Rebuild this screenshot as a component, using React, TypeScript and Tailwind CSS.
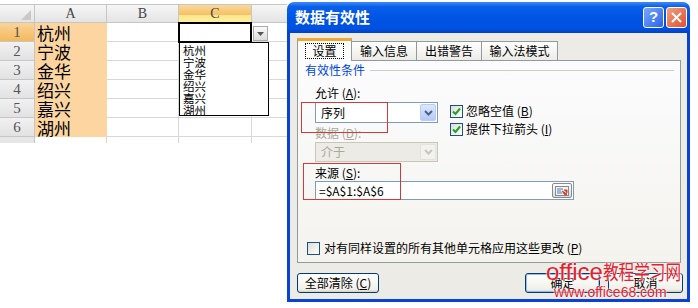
import React from "react";

const cjk = "font-['Noto_Sans_CJK_SC',sans-serif]";
const cities = ["杭州", "宁波", "金华", "绍兴", "嘉兴", "湖州"];

function HeaderCell({ w, label, active }: { w: string; label: string; active?: boolean }) {
  return (
    <div
      className={`${w} flex h-full items-center justify-center border-r border-b border-[#c6c6c6] font-['Liberation_Serif',serif] text-[14px] text-[#444] ${
        active ? "bg-[linear-gradient(#f9d89c,#f6bf62_60%,#fde68a_61%,#fff0a0)]" : "bg-[linear-gradient(#f6f6f6,#e4e4e4)]"
      }`}
    >
      {label}
    </div>
  );
}

function Sheet() {
  return (
    <div className="relative w-[287px] shrink-0 pt-[4px]">
      <div className="flex h-[19px] border-t border-[#c6c6c6]">
        <div className="relative h-full w-[35px] border-r border-b border-[#c6c6c6] bg-[linear-gradient(#f6f6f6,#e4e4e4)]">
          <svg className="absolute right-[3px] bottom-[2px]" width="10" height="10" viewBox="0 0 10 10">
            <polygon points="10,0 10,10 0,10" fill="#c9c9c9" />
          </svg>
        </div>
        <HeaderCell w="w-[72px]" label="A" />
        <HeaderCell w="w-[72px]" label="B" />
        <HeaderCell w="w-[73px]" label="C" active />
        <div className="h-full w-[35px] border-b border-[#c6c6c6] bg-[linear-gradient(#f6f6f6,#e4e4e4)]" />
      </div>
      {cities.map((c, i) => (
        <div key={c} className="flex h-[19px]">
          <div
            className={`flex h-full w-[35px] items-center justify-center border-r border-b border-[#c6c6c6] font-['Liberation_Serif',serif] text-[15px] text-[#555] ${
              i === 0 ? "bg-[linear-gradient(#f9d49a,#f4b95c)]" : "bg-[linear-gradient(#f1f1f1,#e2e2e2)]"
            }`}
          >
            {i + 1}
          </div>
          <div className={`flex h-full w-[72px] items-center border-r border-b border-[#fdd5a0] bg-[#fdd5a0] pl-[2px] ${cjk} text-[17px] leading-none text-black`}>
            {c}
          </div>
          <div className="h-full w-[72px] border-r border-b border-[#d8d8d8]" />
          <div className="h-full w-[73px] border-r border-b border-[#d8d8d8]" />
          <div className="h-full w-[35px] border-b border-[#d8d8d8]" />
        </div>
      ))}
      <div className="flex h-[6px]">
        <div className="h-full w-[35px] border-r border-[#c6c6c6] bg-[#e6e6e6]" />
        <div className="h-full w-[72px] border-r border-[#d8d8d8]" />
        <div className="h-full w-[72px] border-r border-[#d8d8d8]" />
        <div className="h-full w-[73px] border-r border-[#d8d8d8]" />
      </div>

      {/* selected cell C1 */}
      <div className="absolute top-[22px] left-[178px] h-[21px] w-[74px] border-2 border-black bg-white" />
      <div className="absolute top-[26px] left-[253px] flex h-[15px] w-[15px] items-center justify-center border border-[#a9a9a9] bg-[linear-gradient(#fafafa,#dcdcdc)]">
        <svg width="7" height="4" viewBox="0 0 7 4">
          <polygon points="0,0 7,0 3.5,4" fill="#555" />
        </svg>
      </div>
      {/* dropdown list */}
      <div className={`absolute top-[42px] left-[179px] flex h-[74px] w-[90px] flex-col border border-black bg-white pt-[1px] pl-[3px] ${cjk} text-[11.5px] text-black`}>
        {cities.map((c) => (
          <div key={c} className="flex h-[12px] items-center overflow-visible leading-[12px]">
            {c}
          </div>
        ))}
      </div>
    </div>
  );
}

function Check({ on }: { on?: boolean }) {
  return (
    <div className="flex h-[13px] w-[13px] shrink-0 items-center justify-center border border-[#1c5180] bg-[linear-gradient(135deg,#dcdcd7,#ffffff)]">
      {on && (
        <svg width="9" height="9" viewBox="0 0 9 9">
          <path d="M1 4.5 L3.5 7 L8 1.5" stroke="#21a121" strokeWidth="2" fill="none" />
        </svg>
      )}
    </div>
  );
}

function Arrow({ disabled }: { disabled?: boolean }) {
  return (
    <div
      className={`flex h-full w-[16px] items-center justify-center rounded-[2px] border ${
        disabled ? "border-[#e2e2e0] bg-[#f2f2ee]" : "border-[#b8ccf5] bg-[linear-gradient(#dde8ff,#b5c9f7)]"
      }`}
    >
      <svg width="9" height="6" viewBox="0 0 9 6">
        <path d="M1 1 L4.5 4.5 L8 1" stroke={disabled ? "#c9c7ba" : "#4d6185"} strokeWidth="2" fill="none" />
      </svg>
    </div>
  );
}

function Btn({ children, w, def }: { children: React.ReactNode; w: string; def?: boolean }) {
  return (
    <div
      className={`${w} flex h-[20px] items-center justify-center rounded-[3px] border ${
        def ? "border-[#003c74] shadow-[inset_0_0_0_1px_#9bb9f3]" : "border-[#003c74]"
      } bg-[linear-gradient(#ffffff,#f0f0ea_85%,#d6d0c5)] text-[12px] text-black`}
    >
      {children}
    </div>
  );
}

function Dialog() {
  return (
    <div className={`mt-[2px] flex h-[300px] w-[403px] shrink-0 flex-col ${cjk}`}>
      <div className="flex h-[31px] shrink-0 items-center rounded-t-[7px] bg-[linear-gradient(#3d8bf7,#0a5fea_15%,#0054e3_50%,#0052e0_85%,#0042c4)] pr-[3px] pl-[8px]">
        <span className="text-[15px] font-bold text-white">数据有效性</span>
        <div className="ml-auto flex gap-[2px]">
          <div className="flex h-[21px] w-[21px] items-center justify-center rounded-[3px] border border-white bg-[linear-gradient(135deg,#7aa8ff,#2b63e8)] font-['Liberation_Sans',sans-serif] text-[15px] font-bold text-white">
            ?
          </div>
          <div className="flex h-[21px] w-[21px] items-center justify-center rounded-[3px] border border-white bg-[linear-gradient(135deg,#f0a080,#e0502e)]">
            <svg width="11" height="11" viewBox="0 0 11 11">
              <path d="M1 1 L10 10 M10 1 L1 10" stroke="white" strokeWidth="2" />
            </svg>
          </div>
        </div>
      </div>
      <div className="flex flex-1 flex-col border-x-[3px] border-b-[3px] border-[#0842d6] bg-[#ecebe6] pt-[5px] pl-[7px]">
        {/* tabs */}
        <div className="flex h-[22px] items-end text-[12px] text-black">
          <div className="relative z-10 -mb-px flex h-[23px] w-[55px] items-center justify-center border-x border-t-[3px] border-x-[#919b9c] border-t-[#f1a832] bg-[#fbfbf9]">
            <span className="border border-dotted border-black px-[6px] leading-[14px]">设置</span>
          </div>
          <div className="flex h-[19px] w-[65px] items-center justify-center border-t border-r border-[#919b9c] bg-[linear-gradient(#ffffff,#ecebe6)]">输入信息</div>
          <div className="flex h-[19px] w-[65px] items-center justify-center border-t border-r border-[#919b9c] bg-[linear-gradient(#ffffff,#ecebe6)]">出错警告</div>
          <div className="flex h-[19px] w-[76px] items-center justify-center border-t border-r border-[#919b9c] bg-[linear-gradient(#ffffff,#ecebe6)]">输入法模式</div>
        </div>
        {/* panel */}
        <div className="relative flex h-[203px] w-[384px] flex-col border border-[#919b9c] bg-[linear-gradient(#fcfcfe,#f4f3ee)] text-[12px] text-black">
          <div className="mt-[2px] flex items-center pl-[7px]">
            <span className="leading-[14px] text-[#0046d5]">有效性条件</span>
            <div className="mr-[6px] ml-[5px] h-px flex-1 bg-[#d0d0bf]" />
          </div>
          <div className="flex">
            <div className="flex w-[135px] flex-col pl-[17px]">
              <div className="mt-[9px] leading-[14px]">
                允许 (<u>A</u>):
              </div>
              <div className="mt-[2px] flex h-[21px] w-[123px] items-center border border-[#7f9db9] bg-white p-[1px]">
                <span className="flex-1 pl-[4px]">序列</span>
                <Arrow />
              </div>
              <div className="mt-[3px] leading-[14px] text-[#aca899]">
                数据 (<u>D</u>):
              </div>
              <div className="mt-[2px] flex h-[20px] w-[123px] items-center border border-[#c9c7ba] bg-[#ecebe6] p-[1px] text-[#aca899]">
                <span className="flex-1 pl-[4px]">介于</span>
                <Arrow disabled />
              </div>
            </div>
            <div className="mt-[27px] flex flex-col gap-[4px] pl-[17px]">
              <div className="flex items-center gap-[3px] leading-[14px]">
                <Check on />
                <span>
                  忽略空值 (<u>B</u>)
                </span>
              </div>
              <div className="flex items-center gap-[3px] leading-[14px]">
                <Check on />
                <span>
                  提供下拉箭头 (<u>I</u>)
                </span>
              </div>
            </div>
          </div>
          <div className="mt-[4px] pl-[17px] leading-[14px]">
            来源 (<u>S</u>):
          </div>
          <div className="mt-[1px] ml-[17px] flex h-[19px] w-[259px] items-center border border-[#7f9db9] bg-white pr-[1px]">
            <span className="flex-1 pl-[3px] font-['SimSun','Noto_Sans_CJK_SC',monospace] text-[12px]">=$A$1:$A$6</span>
            <div className="flex h-[15px] w-[20px] items-center justify-center rounded-[2px] border border-[#8a8a8a] bg-[linear-gradient(#ffffff,#dcdcd4)]">
              <svg width="14" height="10" viewBox="0 0 14 10">
                <rect x="0.5" y="0.5" width="13" height="9" fill="#f4f4f4" stroke="#7a8aa8" />
                <path d="M2 3 H8 M2 5 H6 M2 7 H7" stroke="#5078b8" />
                <path d="M7 5 L12 8 L10 9 Z M9 4 L12 4 L12 7" fill="#d83a1a" stroke="#d83a1a" />
              </svg>
            </div>
          </div>
          <div className="mt-auto mb-[7px] flex items-center gap-[4px] pl-[9px] leading-[14px]">
            <Check />
            <span>
              对有同样设置的所有其他单元格应用这些更改 (<u>P</u>)
            </span>
          </div>

          {/* red highlight boxes */}
          <div className="absolute top-[41px] left-[3px] h-[31px] w-[87px] border-[1.5px] border-[#d03a3a]" />
          <div className="absolute top-[102px] left-[5px] h-[37px] w-[98px] border-[1.5px] border-[#d03a3a]" />
        </div>
        {/* buttons */}
        <div className="mt-[10px] flex items-center pr-[4px]">
          <Btn w="w-[82px]">
            全部清除 (<u>C</u>)
          </Btn>
          <div className="ml-auto flex gap-[8px]">
            <Btn w="w-[75px]" def>
              确定
            </Btn>
            <Btn w="w-[75px]">取消</Btn>
          </div>
        </div>
      </div>
    </div>
  );
}

export default function App() {
  return (
    <div className="relative flex h-[308px] w-[698px] overflow-hidden bg-white">
      <Sheet />
      <Dialog />
      {/* watermark */}
      <div className="absolute top-[259px] left-[546px] flex items-baseline whitespace-nowrap text-[#e8202a] [text-shadow:0_0_2px_#fff,0_0_2px_#fff]">
        <span className="font-['Liberation_Sans',sans-serif] text-[24px] leading-[26px]">office</span>
        <span className={`${cjk} inline-block origin-left scale-x-[0.78] text-[20px] leading-[26px]`}>教程学习网</span>
      </div>
      <div className="absolute top-[284px] left-[554px] whitespace-nowrap font-['Liberation_Sans',sans-serif] text-[14px] leading-[16px] text-[#e8202a] [text-shadow:0_0_2px_#fff,0_0_2px_#fff]">
        www.office68.com
      </div>
    </div>
  );
}
